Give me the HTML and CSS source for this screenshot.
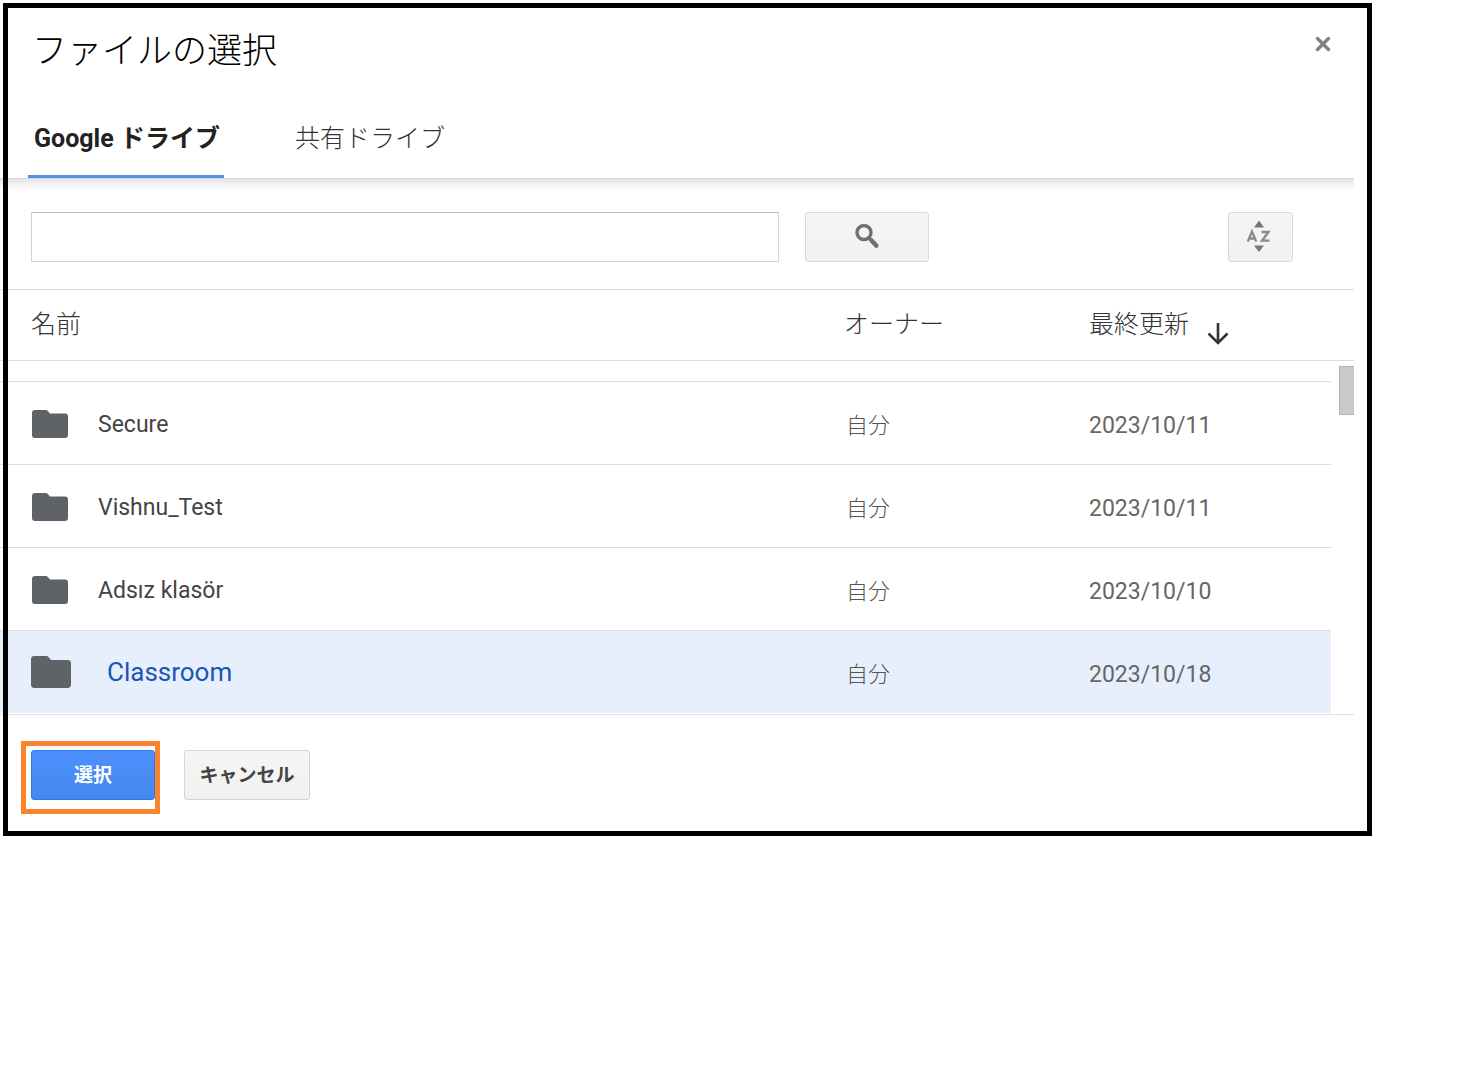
FILE: index.html
```html
<!DOCTYPE html>
<html lang="ja">
<head>
<meta charset="utf-8">
<meta name="viewport" content="width=device-width, initial-scale=1">
<title>ファイルの選択</title>
<link rel="stylesheet" href="styles.css">
</head>
<body>
<svg class="sprite" aria-hidden="true">
  <symbol id="folder" viewBox="0 0 36 28" preserveAspectRatio="none">
    <path d="M3 0h10.500c1 0 1.600.3 2.300 1L18 3.500h15a3 3 0 0 1 3 3V25a3 3 0 0 1-3 3H3a3 3 0 0 1-3-3V3a3 3 0 0 1 3-3z"/>
  </symbol>
</svg>
<main class="picker">
  <div class="content">
    <header class="header">
      <h1 class="title">ファイルの選択</h1>
      <button class="close" type="button" aria-label="閉じる">
        <svg width="16" height="16" viewBox="0 0 16 16"><path d="M2.500 2.500l11 11M13.500 2.500l-11 11" stroke="#808080" stroke-width="3.400" stroke-linecap="round"/></svg>
      </button>
    </header>
    <div class="tabs" role="tablist">
      <button class="tab tab-active" type="button" role="tab" aria-selected="true">Google ドライブ</button>
      <button class="tab" type="button" role="tab" aria-selected="false">共有ドライブ</button>
    </div>
    <div class="toolbar">
      <input class="search" type="text" aria-label="検索">
      <button class="tool tool-search" type="button" aria-label="検索する">
        <svg width="26" height="26" viewBox="0 0 26 26" fill="none" stroke="#707070"><circle cx="10" cy="9.500" r="7" stroke-width="3.400"/><path d="M15 15l2.500 2.500" stroke-width="3.400"/><path d="M17.500 17.500l4.800 5" stroke-width="4.600" stroke-linecap="round"/></svg>
      </button>
      <button class="tool tool-sort" type="button" aria-label="並べ替え">
        <svg width="26" height="34" viewBox="0 0 26 34"><path d="M8 8.500L13 1.500l5 7zM8 26.500h10L13 33z" fill="#777"/><path d="M1.800 22.500L6 12.500l4.200 10M3.500 19.500h5M15.500 13h7l-6.500 8.700h7.500" fill="none" stroke="#8a8a8a" stroke-width="2.300"/></svg>
      </button>
    </div>
    <div class="list">
      <table class="files">
        <colgroup><col><col class="col-owner"><col class="col-date"><col class="col-gutter"></colgroup>
        <thead>
          <tr>
            <th scope="col">名前</th>
            <th scope="col">オーナー</th>
            <th scope="col"><span class="sorted">最終更新
              <svg width="22" height="22" viewBox="0 0 22 22" fill="none" stroke="#333" stroke-width="2.600"><path d="M11 0v20M1.500 10.500L11 20l9.500-9.500"/></svg></span></th>
            <td></td>
          </tr>
        </thead>
        <tbody>
          <tr class="scrolled"><td></td><td></td><td></td><td class="gutter"></td></tr>
          <tr>
            <td class="name"><span class="file"><svg class="folder"><use href="#folder"/></svg>Secure</span></td>
            <td class="owner">自分</td><td class="date">2023/10/11</td><td class="gutter"></td>
          </tr>
          <tr>
            <td class="name"><span class="file"><svg class="folder"><use href="#folder"/></svg>Vishnu_Test</span></td>
            <td class="owner">自分</td><td class="date">2023/10/11</td><td class="gutter"></td>
          </tr>
          <tr>
            <td class="name"><span class="file"><svg class="folder"><use href="#folder"/></svg>Adsız klasör</span></td>
            <td class="owner">自分</td><td class="date">2023/10/10</td><td class="gutter"></td>
          </tr>
          <tr class="selected">
            <td class="name"><span class="file"><svg class="folder"><use href="#folder"/></svg>Classroom</span></td>
            <td class="owner">自分</td><td class="date">2023/10/18</td><td class="gutter"></td>
          </tr>
        </tbody>
      </table>
      <div class="thumb"></div>
    </div>
    <footer class="actions">
      <div class="highlight"><button class="action action-primary" type="button">選択</button></div>
      <button class="action action-cancel" type="button">キャンセル</button>
    </footer>
  </div>
</main>
</body>
</html>
```
FILE: styles.css
```css
* {
  box-sizing: border-box;
}

body {
  margin: 0;
  background: #fff;
  color: #222;
  font-family: Roboto, "Noto Sans CJK JP", sans-serif;
}

button {
  font-family: inherit;
  cursor: pointer;
}

.sprite {
  display: none;
}

.picker {
  position: relative;
  margin-right: 108px;
  padding-right: 18px;
}

/* Frame drawn over the picker, so the rules run underneath it */
.picker::after {
  content: "";
  position: absolute;
  inset: 3px 0 0 3px;
  border: 5px solid #000;
  pointer-events: none;
}

.header {
  display: flex;
  justify-content: space-between;
  height: 100px;
  padding: 28px 20px 0 32px;
}

.title {
  margin: 0;
  font-size: 35px;
  line-height: 48px;
  font-weight: 300;
  color: #000;
}

.close {
  display: grid;
  place-items: center;
  width: 22px;
  height: 32px;
  padding: 0;
  border: 0;
  background: none;
}

.tabs {
  display: flex;
  gap: 63px;
  height: 79px;
  padding-left: 28px;
  border-bottom: 1px solid #d8d8d8;
}

.tab {
  padding: 0 8px 3px;
  border: 0;
  border-bottom: 3px solid transparent;
  background: none;
  color: #333;
  font-size: 25px;
  font-weight: 300;
  white-space: nowrap;
}

.tab-active {
  padding: 0 4px 3px 6px;
  border-bottom-color: #5290e9;
  color: #222;
  font-weight: 700;
}

.toolbar {
  display: flex;
  align-items: center;
  gap: 26px;
  height: 111px;
  padding: 6px 61px 0 31px;
  border-bottom: 1px solid #dcdcdc;
  background: linear-gradient(#e6e6e6, #fff) top / 100% 11px no-repeat;
}

.search {
  flex: 0 1 748px;
  min-width: 0;
  height: 50px;
  padding: 0 12px;
  border: 1px solid #d4d4d4;
  border-top-color: #b9b9b9;
  font: 22px Roboto, "Noto Sans CJK JP", sans-serif;
}

.tool {
  display: grid;
  place-items: center;
  height: 50px;
  padding: 0 0 2px;
  border: 1px solid #d9d9d9;
  border-radius: 3px;
  background: linear-gradient(#f5f5f5, #f1f1f1);
}

.tool-search {
  width: 124px;
}

.tool-sort {
  width: 65px;
  margin-left: auto;
  padding-right: 4px;
}

.list {
  position: relative;
  padding-bottom: 1px;
}

.files {
  width: 100%;
  table-layout: fixed;
  border-spacing: 0;
}

.col-owner {
  width: 245px;
}

.col-date {
  width: 242px;
}

.col-gutter {
  width: 23px;
}

.files th,
.files td {
  height: 83px;
  padding: 0;
  border-bottom: 1px solid #dcdcdc;
  text-align: left;
}

.files thead th,
.files thead td {
  height: 71px;
  color: #333;
  font-size: 25px;
  line-height: 36px;
  font-weight: 300;
}

.files th:first-child,
.files td:first-child {
  padding-left: 31px;
}

.sorted {
  display: flex;
  align-items: center;
  gap: 18px;
}

.sorted svg {
  margin-top: 18px;
}

.files .scrolled td {
  height: 21px;
}

.files .name {
  padding-top: 2px;
  color: #444;
  font-size: 23px;
}

.file {
  display: flex;
  align-items: center;
  gap: 30px;
  padding-left: 1px;
}

.folder {
  width: 36px;
  height: 28px;
  fill: #5f6368;
}

.files .owner,
.files .date {
  padding-top: 4px;
  color: #666;
  font-size: 23px;
}

.files .owner {
  padding-top: 0;
  padding-left: 2px;
  color: #555;
  font-size: 22px;
  font-weight: 300;
}

.files .gutter {
  border-bottom: 0;
}

.files .selected td {
  height: 82px;
  border-bottom: 0;
  background: #e8effc;
}

.files .selected .name {
  padding-top: 0;
}

.files .selected .gutter {
  background: none;
}

.selected .file {
  gap: 36px;
  padding-left: 0;
  color: #1a55b8;
  font-size: 26px;
}

.selected .folder {
  width: 40px;
  height: 32px;
}

.thumb {
  position: absolute;
  top: 76px;
  right: 0;
  width: 15px;
  height: 49px;
  border: 1px solid #b4b4b4;
  border-right: 0;
  background: #c9c9c9;
}

.actions {
  display: flex;
  align-items: flex-start;
  gap: 24px;
  height: 122px;
  padding: 26px 0 0 21px;
  border-top: 1px solid #dfe0e6;
}

.highlight {
  padding: 4px 0 9px 5px;
  border: 5px solid #fb832c;
}

.action {
  width: 126px;
  height: 50px;
  padding: 0 0 3px;
  border: 1px solid #d5d5d5;
  border-radius: 3px;
  background: linear-gradient(#f5f5f5, #f1f1f1);
  color: #444;
  font-size: 19px;
  font-weight: 700;
  white-space: nowrap;
}

.action-cancel {
  margin-top: 9px;
}

.action-primary {
  display: block;
  width: 124px;
  border-color: #3079ed;
  background: linear-gradient(#4d90fe, #4787ed);
  color: #fff;
}
```
